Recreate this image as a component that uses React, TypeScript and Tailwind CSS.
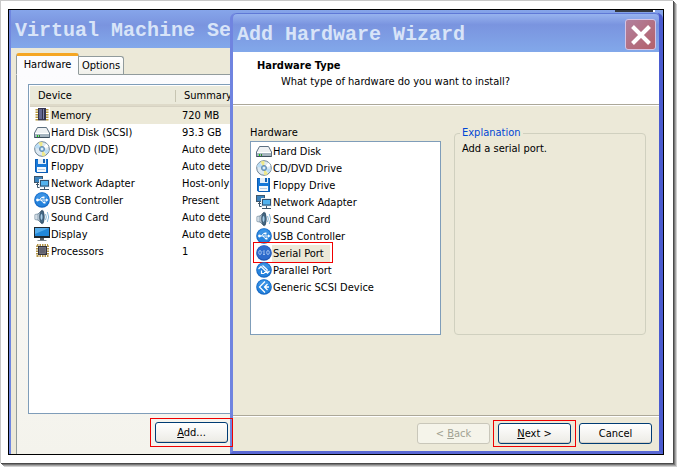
import type { ReactNode } from "react";

type IconName =
    | "memory"
    | "disk"
    | "cd"
    | "floppy"
    | "network"
    | "usb"
    | "sound"
    | "display"
    | "cpu"
    | "serial"
    | "parallel"
    | "scsi";

const devices: { icon: IconName; name: string; summary: string }[] = [
    { icon: "memory", name: "Memory", summary: "720 MB" },
    { icon: "disk", name: "Hard Disk (SCSI)", summary: "93.3 GB" },
    { icon: "cd", name: "CD/DVD (IDE)", summary: "Auto detect" },
    { icon: "floppy", name: "Floppy", summary: "Auto detect" },
    { icon: "network", name: "Network Adapter", summary: "Host-only" },
    { icon: "usb", name: "USB Controller", summary: "Present" },
    { icon: "sound", name: "Sound Card", summary: "Auto detect" },
    { icon: "display", name: "Display", summary: "Auto detect" },
    { icon: "cpu", name: "Processors", summary: "1" },
];

const hardwareTypes: { icon: IconName; name: string }[] = [
    { icon: "disk", name: "Hard Disk" },
    { icon: "cd", name: "CD/DVD Drive" },
    { icon: "floppy", name: "Floppy Drive" },
    { icon: "network", name: "Network Adapter" },
    { icon: "sound", name: "Sound Card" },
    { icon: "usb", name: "USB Controller" },
    { icon: "serial", name: "Serial Port" },
    { icon: "parallel", name: "Parallel Port" },
    { icon: "scsi", name: "Generic SCSI Device" },
];

const blueDisc = (
    <>
        <circle cx="8" cy="8" r="7.8" fill="#1668c4" />
        <circle cx="8" cy="7.6" r="7" fill="#2583dd" />
        <path d="M2 5.5a6.5 6.5 0 0 1 12 0Q8 8 2 5.5z" fill="#3a92e4" />
    </>
);

const drawings: Record<IconName, ReactNode> = {
    memory: (
        <>
            <path d="M3 2v12M13 2v12" stroke="#b99a3c" strokeWidth="3" strokeDasharray="1.5 1" />
            <rect x="4" y="1" width="8" height="12" fill="#33334f" />
            <rect x="5" y="2" width="3" height="10" fill="#62658f" />
            <rect x="9" y="2" width="1" height="10" fill="#8084a8" />
            <path d="M4 13.5h8" stroke="#aaa" />
        </>
    ),
    disk: (
        <>
            <path d="M3.5 3.5h9L15.500 9v4.500H.5V9z" fill="#eef1f3" stroke="#5c6f80" />
            <path d="M1 9.500h14V13H1z" fill="#a5b4bf" />
            <path d="M1 9.500h14" stroke="#fff" />
            <path d="M.5 13.500h15" stroke="#3e4f5e" />
            <path d="M3 11h1v2H3z" fill="#18c418" />
            <path d="M5 11h1v2H5z" fill="#2a8a2a" />
        </>
    ),
    cd: (
        <>
            <circle cx="8" cy="8" r="7.300" fill="#dde9f2" stroke="#6c8395" />
            <path d="M8 8 4.500 1.700A7 7 0 0 1 8.500 1z" fill="#efe98a" />
            <path d="M8 8l4 6a7 7 0 0 1-4 1z" fill="#efe98a" />
            <path d="M8 8 1 7a7 7 0 0 1 2.500-4.500z" fill="#b9dcf4" />
            <path d="M8 8l7 1a7 7 0 0 1-2.500 4z" fill="#b9dcf4" />
            <path d="M8 8l4.500-5.500A7 7 0 0 1 14.500 6z" fill="#fff" />
            <circle cx="8" cy="8" r="2.600" fill="#86b6dc" stroke="#56799a" strokeWidth=".7" />
            <circle cx="8" cy="8" r="1" fill="#fff" />
        </>
    ),
    floppy: (
        <>
            <path d="M1 1h13v14H2.500L1 13.500z" fill="#1678d8" />
            <path d="M1.500 1.500h12v13H3L1.500 13z" fill="none" stroke="#0d5cb2" />
            <rect x="4" y="1" width="8" height="5" fill="#e4eef8" />
            <rect x="9" y="1" width="2" height="4" fill="#1463b4" />
            <rect x="3" y="9" width="9" height="5" fill="#f4f8fc" />
            <path d="M4 11.500h7" stroke="#b8cce0" />
        </>
    ),
    network: (
        <>
            <rect x=".5" y="1.500" width="8" height="6" fill="#3b83bd" stroke="#3d566c" />
            <path d="M3.500 8v4.500H6M2 9.500h3" fill="none" stroke="#3d566c" />
            <rect x="5.500" y="4.500" width="10" height="7.500" fill="#3296de" stroke="#e8eef4" />
            <rect x="6.500" y="5.500" width="8" height="5.500" fill="#52b2ee" stroke="#31506e" />
            <path d="M10.500 12v2M6 14.500h9" stroke="#3d566c" />
        </>
    ),
    usb: (
        <>
            {blueDisc}
            <path d="M3 8h10M5.500 8l2-2.500H9M7 8l2 2.500h1.500" fill="none" stroke="#fff" />
            <circle cx="3.500" cy="8" r="1.400" fill="#fff" />
            <path d="M12 6.300 14.500 8 12 9.700zM8.500 4.500h2v2h-2zM9.500 9.500h2v2h-2z" fill="#fff" />
        </>
    ),
    sound: (
        <>
            <path d="M1 5.500 4 5l4-4 1.500 1v12L8 15l-4-4-3-.5z" fill="#aebfcd" stroke="#7f95a7" />
            <path d="M2 5.500v5" stroke="#f3f8fb" />
            <ellipse cx="8" cy="8" rx="2.300" ry="6.300" fill="#436783" stroke="#284358" strokeWidth=".6" />
            <ellipse cx="7.500" cy="8" rx="1" ry="3" fill="#a9cfea" />
            <path d="M11.500 5q1.700 3 0 6M13.300 3q2.800 5 0 10" fill="none" stroke="#86b9da" />
        </>
    ),
    display: (
        <>
            <rect x="0" y="1" width="16" height="11" fill="#20282f" />
            <rect x="1" y="2" width="14" height="8" fill="#2288da" />
            <path d="M1 2h14L1 8z" fill="#56adec" />
            <path d="M6 12h4v2H6z" fill="#555e66" />
            <path d="M3.500 14.500h9" stroke="#7d868d" />
        </>
    ),
    cpu: (
        <>
            <path d="M3 2h11M3 13h11" stroke="#b49546" strokeWidth="2" strokeDasharray="1.5 1" />
            <path d="M3 2.500v11M14 2.500v11" stroke="#b49546" strokeWidth="2" strokeDasharray="1.5 1" />
            <rect x="4" y="3" width="9" height="9" fill="#34343e" />
            <rect x="5.500" y="4.500" width="6" height="6" fill="#62626e" stroke="#898993" strokeWidth=".6" />
        </>
    ),
    serial: (
        <>
            <circle cx="8" cy="8" r="7.800" fill="#1f57b4" />
            <circle cx="8" cy="7.600" r="7" fill="#2e6bcc" />
            <ellipse cx="4" cy="7.500" rx="1.300" ry="2" fill="none" stroke="#a9c6f0" strokeWidth=".9" />
            <path d="M7 6.500 8 5.500v4M7 9.500h2" fill="none" stroke="#a9c6f0" strokeWidth=".9" />
            <ellipse cx="12" cy="7.500" rx="1.300" ry="2" fill="none" stroke="#a9c6f0" strokeWidth=".9" />
        </>
    ),
    parallel: (
        <>
            {blueDisc}
            <path
                d="M2.500 7 5 4.500 10.500 10M8 10.500h3V7.500M13.500 9 11 11.500M5.500 8.500v3h3M6.500 3.500l5 4.500"
                fill="none"
                stroke="#fff"
                strokeWidth="1.200"
            />
        </>
    ),
    scsi: (
        <>
            {blueDisc}
            <path d="M9 2.500 3.500 8 9 13.500M11.500 5 8.500 8l3 3M8.500 8H13" fill="none" stroke="#fff" strokeWidth="1.300" />
        </>
    ),
};

function DeviceIcon({ name }: { name: IconName }) {
    return (
        <svg viewBox="0 0 16 16" className="h-4 w-4 shrink-0" aria-hidden="true">
            {drawings[name]}
        </svg>
    );
}

function XpButton({ children, disabled }: { children: ReactNode; disabled?: boolean }) {
    return (
        <button
            type="button"
            disabled={disabled}
            className="h-[21px] w-[73px] rounded-[3px] border border-[#003c74] bg-linear-to-b from-white to-[#ecebe5] text-center leading-4 shadow-[inset_0_-1px_0_#d6d0c5] disabled:border-[#c9c7ba] disabled:bg-none disabled:bg-[#f5f4ea] disabled:text-[#a1a192] disabled:shadow-none"
        >
            {children}
        </button>
    );
}

function SettingsWindow() {
    return (
        <section className="flex flex-1 flex-col border-l-2 border-[#6f86e0] bg-[#ece9d8]">
            <header className="flex h-[38px] items-center bg-linear-to-b from-[#86a5ea] via-[#7a94df] via-40% to-[#82a8ea] pt-1 pl-1">
                <h1 className="w-[216px] overflow-hidden font-['Liberation_Mono',monospace] text-xl font-bold whitespace-nowrap text-[#d8e4f8]">
                    Virtual Machine Se
                </h1>
            </header>

            <div className="flex flex-1 flex-col pt-[5px] pl-[5px]">
                <div role="tablist" className="flex items-end">
                    <button
                        type="button"
                        role="tab"
                        aria-selected="true"
                        className="z-1 -mb-px h-[22px] w-[63px] rounded-t-[3px] border border-t-[3px] border-[#919b9c] border-t-[#f5a623] border-b-[#fcfcfe] bg-[#fcfcfe] leading-4"
                    >
                        Hardware
                    </button>
                    <button
                        type="button"
                        role="tab"
                        aria-selected="false"
                        className="h-[18px] w-[45px] rounded-tr-[3px] border border-b-0 border-l-0 border-[#919b9c] bg-linear-to-b from-white to-[#f0f0ea] leading-4"
                    >
                        Options
                    </button>
                </div>

                <div className="flex flex-1 flex-col border-t border-l border-[#919b9c] bg-linear-to-b from-[#fcfcfe] to-[#f4f3ec] pt-[9px] pb-[7px] pl-[11px]">
                    <div className="mr-5 flex-1 border border-[#7f9db9] bg-white p-px">
                        <table className="w-full table-fixed border-collapse text-left">
                            <colgroup>
                                <col className="w-[146px]" />
                                <col />
                            </colgroup>
                            <thead>
                                <tr className="h-5 border-b border-[#d6d2c2] bg-[#ebeadb] shadow-[inset_0_-2px_0_#dedac9]">
                                    <th className="pl-2 font-normal">
                                        <span className="block border-r border-[#c7c5b2] leading-3">Device</span>
                                    </th>
                                    <th className="pl-2 font-normal">Summary</th>
                                </tr>
                            </thead>
                            <tbody>
                                {devices.map((device, i) => (
                                    <tr key={device.name} className="h-[17px]">
                                        <td className="pl-1">
                                            <div className="flex h-[17px] items-start">
                                                <DeviceIcon name={device.icon} />
                                                <span className={`flex-1 pl-px leading-[17px] whitespace-nowrap ${i === 0 ? "bg-[#ece9d8]" : ""}`}>
                                                    {device.name}
                                                </span>
                                            </div>
                                        </td>
                                        <td className={`pl-1.5 leading-[17px] whitespace-nowrap ${i === 0 ? "bg-[#ece9d8]" : ""}`}>
                                            {device.summary}
                                        </td>
                                    </tr>
                                ))}
                            </tbody>
                        </table>
                    </div>

                    <div className="z-20 mt-1 ml-[122px] flex h-[29px] w-[83px] items-center justify-center border border-[#f00000]">
                        <XpButton>
                            <u>A</u>dd...
                        </XpButton>
                    </div>
                </div>
            </div>
        </section>
    );
}

function AddHardwareWizard() {
    return (
        <section
            role="dialog"
            aria-labelledby="wizard-title"
            className="absolute top-[3px] right-0 bottom-0 left-[221px] z-10 flex flex-col rounded-t-md border-r-4 border-b-[3px] border-l-[3px] border-r-[#4a5bd0] border-b-[#5a68d4] border-l-[#7084e0] bg-[#7084e0]"
        >
            <header className="flex h-[39px] shrink-0 items-center justify-between rounded-t bg-linear-to-b from-[#9ab6f0] via-[#7a94df] via-30% to-[#82a8ea] pt-1 pr-[3px] pl-1 shadow-[inset_0_1px_0_#5f78d6]">
                <h2
                    id="wizard-title"
                    className="font-['Liberation_Mono',monospace] text-xl font-bold whitespace-nowrap text-[#d8e4f8]"
                >
                    Add Hardware Wizard
                </h2>
                <button
                    type="button"
                    aria-label="Close"
                    className="flex h-[31px] w-[31px] items-center justify-center rounded-[3px] border border-[#d5c4e4] bg-linear-to-br from-[#b0809e] to-[#b4606a]"
                >
                    <svg viewBox="0 0 20 20" className="h-5 w-5" aria-hidden="true">
                        <path d="M1.500 1.500l17 17M18.500 1.500l-17 17" stroke="#fff" strokeWidth="4" />
                    </svg>
                </button>
            </header>

            <div className="border-b border-[#aca899] bg-white pt-1.5 pb-[14px] pl-6">
                <h3 className="leading-4 font-bold">Hardware Type</h3>
                <p className="pl-6 leading-4">What type of hardware do you want to install?</p>
            </div>

            <div className="flex flex-1 flex-col border-t border-white bg-[#ece9d8]">
                <div className="flex flex-1 gap-[13px] pt-[19px] pr-[13px] pb-20 pl-[17px]">
                    <div className="flex w-[191px] shrink-0 flex-col">
                        <span id="hardware-label" className="leading-4">
                            Hardware
                        </span>
                        <ul
                            role="listbox"
                            aria-labelledby="hardware-label"
                            className="flex-1 border border-[#7f9db9] bg-white pt-px pl-[5px]"
                        >
                            {hardwareTypes.map((type) => {
                                const selected = type.name === "Serial Port";
                                return (
                                    <li
                                        key={type.name}
                                        role="option"
                                        aria-selected={selected}
                                        className="relative flex h-[17px] w-fit items-start"
                                    >
                                        <DeviceIcon name={type.icon} />
                                        <span
                                            className={`pl-px leading-[17px] whitespace-nowrap ${selected ? "bg-[#ece9d8] pr-1.5" : ""}`}
                                        >
                                            {type.name}
                                        </span>
                                        {selected && (
                                            <span className="absolute -top-[3px] -right-[3px] -bottom-px -left-[3px] border border-[#f00000]" />
                                        )}
                                    </li>
                                );
                            })}
                        </ul>
                    </div>

                    <fieldset className="min-w-0 flex-1 rounded border border-[#d0d0bf] px-[7px]">
                        <legend className="ml-[-2px] px-0.5 leading-4 text-[#0046d5]">Explanation</legend>
                        <p className="leading-4">Add a serial port.</p>
                    </fieldset>
                </div>

                <div className="flex items-center justify-end border-t border-[#aca899] pt-1 pr-[7px] pb-1 shadow-[inset_0_1px_0_#fff]">
                    <XpButton disabled>
                        &lt; <u>B</u>ack
                    </XpButton>
                    <div className="mx-[3px] flex h-[27px] w-[83px] items-center justify-center border border-[#f00000]">
                        <XpButton>
                            <u>N</u>ext &gt;
                        </XpButton>
                    </div>
                    <XpButton>Cancel</XpButton>
                </div>
            </div>
        </section>
    );
}

export default function App() {
    return (
        <div className="flex min-h-screen flex-col bg-white pr-1 pb-1 font-['DejaVu_Sans_Condensed','DejaVu_Sans',sans-serif] text-[11px] text-black">
            <main className="flex flex-1 flex-col border-t border-l border-[#c8c8c8] bg-white pt-2 pr-[9px] pb-2 pl-[7px] shadow-[1px_1px_0_#4a4a4a,2px_2px_0_#777,3px_3px_0_#a5a5a5,4px_4px_0_#d0d0d0]">
                <div className="relative flex flex-1 flex-col border border-black">
                    <SettingsWindow />
                    <div className="absolute top-0 right-2 h-0.5 w-10 border-r-2 border-white bg-[#33383f]" />
                    <AddHardwareWizard />
                </div>
            </main>
        </div>
    );
}
